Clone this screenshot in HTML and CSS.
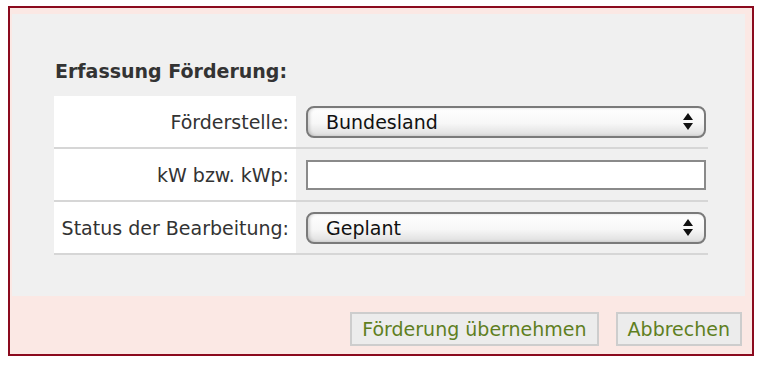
FILE: index.html
```
<html>
	<head>
		<meta charset="utf-8">
		<title>Erfassung Förderung</title>
		<link rel="stylesheet" href="styles.css">
	</head>
	<body>
		<div class="dialog">
			<div class="dialog-body">
				<h3 class="dialog-title">Erfassung Förderung:</h3>
				<div class="form-table">
					<div class="form-row">
						<label class="form-label">Förderstelle:</label>
						<div class="form-field">
							<div class="fake-select">
								<span>Bundesland</span>
								<svg class="select-arrows" width="10" height="17" viewBox="0 0 10 17"><path d="M5 0L10 7H0Z M0 10H10L5 17Z" fill="#111"/></svg>
							</div>
						</div>
					</div>
					<div class="form-row">
						<label class="form-label">kW bzw. kWp:</label>
						<div class="form-field">
							<input class="text-input" type="text">
						</div>
					</div>
					<div class="form-row">
						<label class="form-label">Status der Bearbeitung:</label>
						<div class="form-field">
							<div class="fake-select">
								<span>Geplant</span>
								<svg class="select-arrows" width="10" height="17" viewBox="0 0 10 17"><path d="M5 0L10 7H0Z M0 10H10L5 17Z" fill="#111"/></svg>
							</div>
						</div>
					</div>
				</div>
			</div>
			<div class="dialog-buttons">
				<button class="dialog-button">Förderung übernehmen</button>
				<button class="dialog-button">Abbrechen</button>
			</div>
		</div>
	</body>
</html>
```
FILE: styles.css
```
body {
	margin: 6px 8px;
	font-family: "DejaVu Sans", Verdana, sans-serif;
	color: #333;
	background: #fff;
}

.dialog {
	border: 2px solid #8b0a1e;
	background-color: #fbe8e4;
	padding: 6px 7px 0 2px;
}

.dialog-body {
	background-color: #f0f0f0;
	padding: 46px 37px 41px 42px;
}

.dialog-title {
	margin: 0 0 14px 1px;
	font-size: 19px;
	line-height: 22px;
	font-weight: bold;
	color: #333;
}

.form-table {
	display: flex;
	flex-direction: column;
}

.form-row {
	display: grid;
	grid-template-columns: 242px 1fr;
	height: 51px;
	border-bottom: 2px solid #d6d6d6;
}

.form-label {
	background-color: #fff;
	display: flex;
	align-items: center;
	justify-content: flex-end;
	padding-right: 7px;
	font-size: 19px;
	color: #333;
}

.form-field {
	display: flex;
	align-items: center;
	padding: 0 2px 0 10px;
}

.fake-select {
	box-sizing: border-box;
	width: 100%;
	height: 32px;
	border: 2px solid #7a7a7a;
	border-radius: 8px;
	background: linear-gradient(180deg, #ffffff 0%, #f7f7f7 55%, #dedede 100%);
	box-shadow: inset 2px 0 3px rgba(0,0,0,0.15);
	display: flex;
	align-items: center;
	justify-content: space-between;
	padding: 0 11px 0 18px;
	font-size: 19px;
	color: #111;
}

.select-arrows {
	display: block;
}

.text-input {
	box-sizing: border-box;
	width: 100%;
	height: 30px;
	border: 2px solid #8a8a8a;
	background: #fff;
	margin: 0;
}

.dialog-buttons {
	display: flex;
	justify-content: flex-end;
	gap: 17px;
	padding: 16px 3px 8px 0;
}

.dialog-button {
	height: 34px;
	padding: 0 10px;
	background-color: #ececec;
	border: 2px solid #cdcdcd;
	font-family: "DejaVu Sans", Verdana, sans-serif;
	font-size: 19px;
	color: #5f7f1f;
}
```
